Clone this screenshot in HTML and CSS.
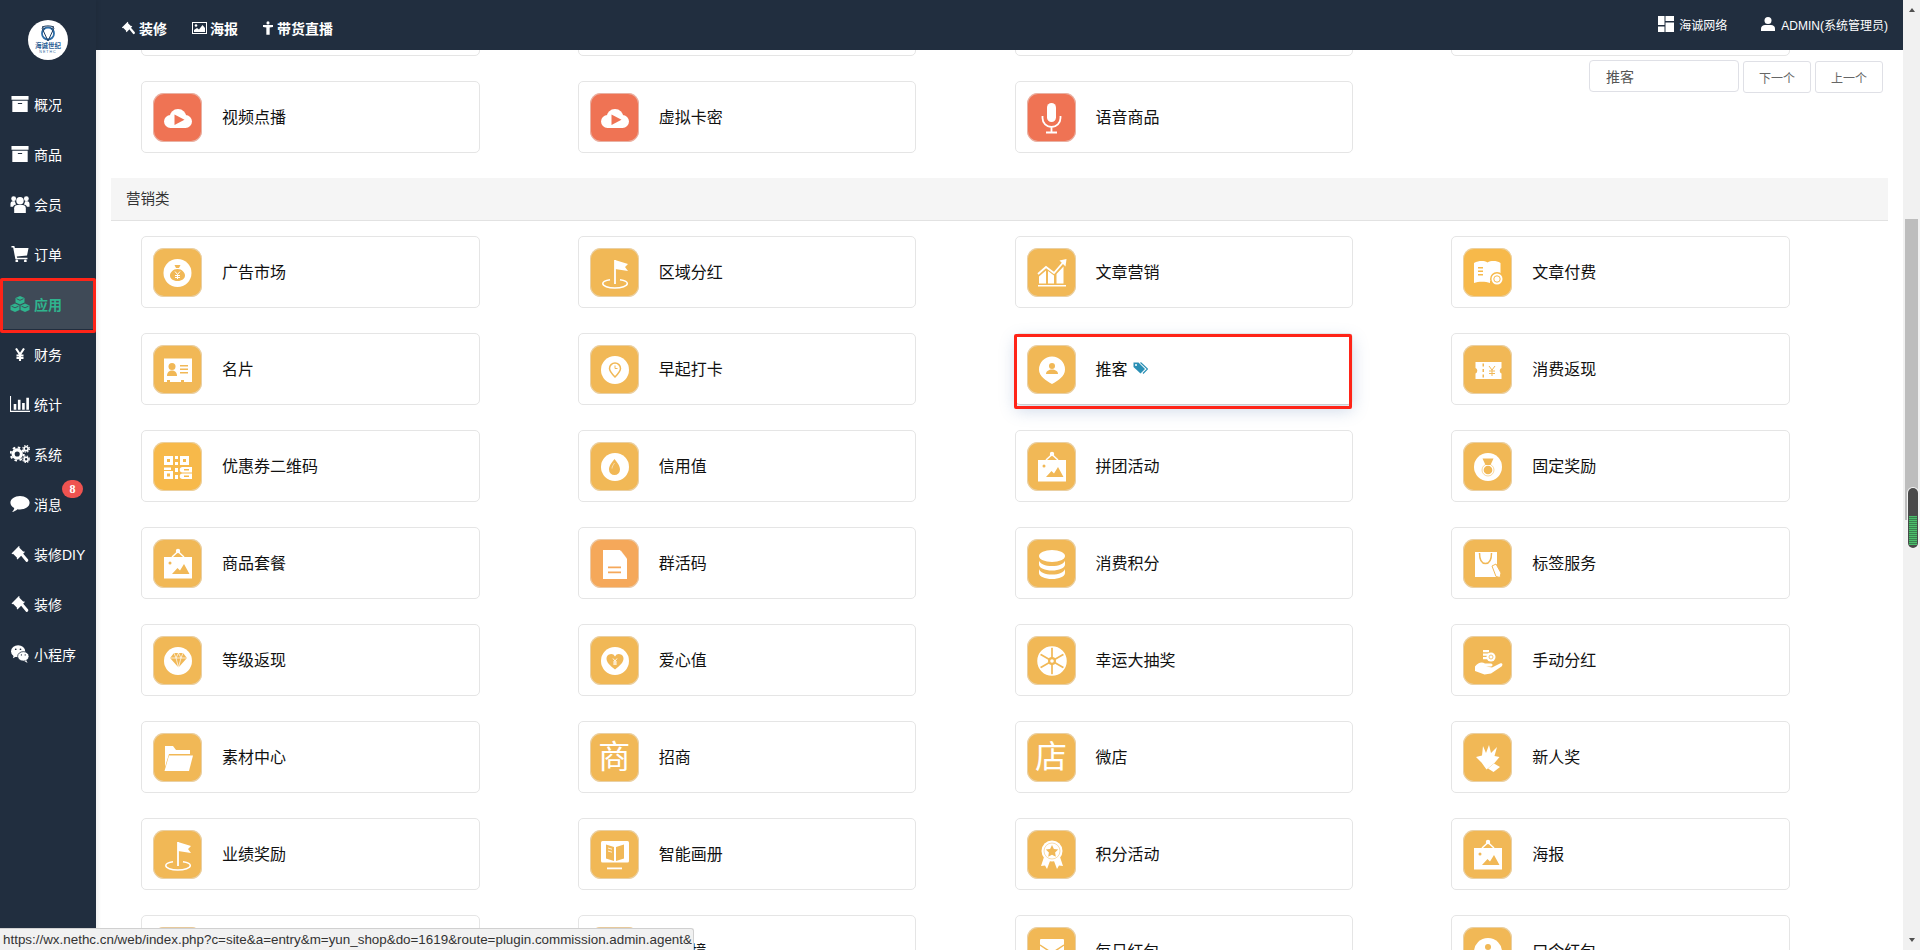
FILE: index.html
```html
<!DOCTYPE html>
<html lang="zh-CN">
<head>
<meta charset="utf-8">
<title>应用</title>
<link rel="stylesheet" href="styles.css">
</head>
<body class="page">
<svg class="defs" xmlns="http://www.w3.org/2000/svg" aria-hidden="true">
<symbol id="g-cloud" viewBox="0 0 49 49"><circle cx="17.5" cy="28.5" r="6.5" fill="#fff"/><circle cx="25" cy="24.5" r="8.5" fill="#fff"/><circle cx="32.5" cy="28.5" r="6.5" fill="#fff"/><rect x="17" y="27" width="16" height="8" fill="#fff"/><path d="M21.5 21.5l10 5.2-10 5.3z" fill="currentColor"/></symbol>
<symbol id="g-mic" viewBox="0 0 49 49"><rect x="20" y="10" width="9" height="19" rx="4.5" fill="#fff"/><path d="M15.5 23v2a9 9 0 0 0 18 0v-2M24.5 34v5M19 39.5h11" fill="none" stroke="#fff" stroke-width="1.8"/></symbol>
<symbol id="g-bag" viewBox="0 0 49 49"><circle cx="24.5" cy="25" r="14" fill="#fff"/><path d="M21.5 17h6l-1.5 3h-3zM24.5 21c4.500 0 7.500 3.500 7.500 6.500s-3 5.500-7.500 5.500-7.500-2.500-7.500-5.500 3-6.500 7.500-6.500z" fill="currentColor"/><path d="M22 23.500l2.500 3 2.500-3M24.500 26.500v4.500M22 27.500h5M22 29.500h5" fill="none" stroke="#fff" stroke-width="1"/></symbol>
<symbol id="g-flag" viewBox="0 0 49 49"><path d="M25 12v24" stroke="#fff" stroke-width="1.8"/><path d="M25 12l13 4-3 3 3 4-13-2z" fill="#fff"/><path d="M20 31.800c-4.500.8-7.200 2-7.200 3.700 0 2.500 5.300 4.500 12 4.500s12.500-2 12.500-4.500c0-1.700-2.700-3-7.300-3.700" fill="none" stroke="#fff" stroke-width="1.500"/></symbol>
<symbol id="g-chart" viewBox="0 0 49 49"><path d="M11 37h28v1.500H11z" fill="#fff"/><path d="M12 35.500v-7l7-6v13zM21 35.500V23l6 4.500v8zM29.500 35.500V26l7-7.500v17z" fill="#fff"/><path d="M11 26l8-7 8 6 9.500-11" fill="none" stroke="#fff" stroke-width="1.800"/><path d="M32.500 12.500l7-1.500-1 7.500z" fill="#fff"/></symbol>
<symbol id="g-bookcoin" viewBox="0 0 49 49"><path d="M11 15c5-2.500 10-2.500 13.500-.5 3.500-2 9-2 13 .5v18H27v2c-4-1.500-11-2-16 0z" fill="#fff"/><path d="M15 19h5v1.500h-5zM15 22.500h5V24h-5zM15 26h5v1.500h-5z" fill="currentColor"/><circle cx="34" cy="31" r="7" fill="currentColor"/><circle cx="34" cy="31" r="5.500" fill="#fff"/><circle cx="34" cy="31" r="3.200" fill="none" stroke="currentColor"/></symbol>
<symbol id="g-card" viewBox="0 0 49 49"><path d="M11 13.500h28V37h-8v-2h-3v2H17v-2h-3v2h-3z" fill="#fff"/><circle cx="19" cy="21.500" r="3.500" fill="currentColor"/><path d="M14 31c0-4 2.500-5.500 5-5.500s5 1.500 5 5.500z" fill="currentColor"/><path d="M27 20h8v1.500h-8zM27 23.500h8V25h-8zM27 27h8v1.500h-8z" fill="currentColor"/></symbol>
<symbol id="g-pinclock" viewBox="0 0 49 49"><circle cx="25" cy="25" r="14" fill="#fff"/><path d="M25 18a5.500 5.500 0 0 1 5.500 5.500c0 3-3 6-5.500 8.500-2.500-2.500-5.500-5.500-5.500-8.500A5.500 5.500 0 0 1 25 18z" fill="none" stroke="currentColor" stroke-width="1.500"/><path d="M25 20.500v3h2.500" fill="none" stroke="currentColor"/></symbol>
<symbol id="g-pinuser" viewBox="0 0 49 49"><path d="M25 11.500a13 13 0 0 1 13 13c0 7-7 11-13 14.500-6-3.500-13-7.500-13-14.500a13 13 0 0 1 13-13z" fill="#fff"/><circle cx="25" cy="21" r="3" fill="currentColor"/><path d="M19 29c0-3 3-4.500 6-4.500s6 1.500 6 4.500z" fill="currentColor"/></symbol>
<symbol id="g-ticket" viewBox="0 0 49 49"><path d="M12.500 17h26v6a3 3 0 0 0 0 5.500V34h-26v-5.500a3 3 0 0 0 0-5.500z" fill="#fff"/><path d="M19.500 18.500H21v3h-1.500zM19.500 24H21v3h-1.500zM19.500 29.500H21v3h-1.500z" fill="currentColor"/><path d="M26 21l3 4 3-4M29 25v6M26 26h6M26 28.500h6" fill="none" stroke="currentColor"/></symbol>
<symbol id="g-qr" viewBox="0 0 49 49"><path fill-rule="evenodd" d="M11 14h9v9h-9zM14 17v3h3v-3zM11 29h9v8h-9zM14 31.500v3h3v-3zM27 14h9v9h-9zM30 17v3h3v-3zM22 14h3v3h-3zM22 20h3v3h-3zM11 25.500h7V28h-7zM22 26h3v4h-3zM22 33h3v4h-3zM29.500 25H39v5.500H29.500a2.750 2.750 0 0 1 0-5.500zM31 27v1.500h5V27zM29.500 31.500H39V37H29.500a2.750 2.750 0 0 1 0-5.500zM31 33.500V35h5v-1.500z" fill="#fff"/></symbol>
<symbol id="g-drop" viewBox="0 0 49 49"><circle cx="25" cy="25" r="14" fill="#fff"/><path d="M24.500 17c2.500 3.500 5.500 6.500 5.500 10.500a5.500 5.500 0 0 1-11 0c0-4 3-7 5.500-10.500z" fill="currentColor"/><path d="M24.500 21c-1.200 2-2.500 3.500-2.500 5.500" fill="none" stroke="#fff" stroke-opacity=".5"/></symbol>
<symbol id="g-poster" viewBox="0 0 49 49"><rect x="11" y="18" width="28" height="21.500" fill="#fff"/><path d="M19 18l6-5.500 6 5.500" fill="none" stroke="#fff" stroke-width="1.500"/><circle cx="25" cy="12" r="2.200" fill="#fff"/><circle cx="17" cy="24" r="1.500" fill="currentColor"/><path d="M19 35l5.500-6 2.500 2.500 4-6.500 5.500 10z" fill="currentColor"/></symbol>
<symbol id="g-medal" viewBox="0 0 49 49"><circle cx="25" cy="25" r="14" fill="#fff"/><path d="M19.500 16.500h11L27.500 23h-5z" fill="currentColor"/><circle cx="25" cy="28" r="6" fill="none" stroke="currentColor" stroke-opacity=".55"/><circle cx="25" cy="28" r="4.300" fill="currentColor"/></symbol>
<symbol id="g-doc" viewBox="0 0 49 49"><path d="M13 11h17l7 9v20H13z" fill="#fff"/><path d="M31 11.500l6 8h-6z" fill="#fff" opacity=".55"/><path d="M18 27.500h13v1.800H18zM18 32.500h13v1.800H18z" fill="currentColor"/></symbol>
<symbol id="g-db" viewBox="0 0 49 49"><ellipse cx="25" cy="17" rx="13" ry="6" fill="#fff"/><path d="M12 21.500c1 3.500 6 5.500 13 5.500s12-2 13-5.500v4c0 3.500-6 6-13 6s-13-2.500-13-6z" fill="#fff"/><path d="M12 30c1 3.500 6 5.500 13 5.500S37 33.500 38 30v4c0 3.500-6 6-13 6s-13-2.500-13-6z" fill="#fff"/></symbol>
<symbol id="g-bagtag" viewBox="0 0 49 49"><path d="M12 13h22v25H12z" fill="#fff"/><path d="M16.500 14c0 7 2 10.500 6 10.500s6-3.500 6-10.500" fill="none" stroke="currentColor" stroke-width="1.500"/><path d="M29 27l4-2 5 9-1 4.500-4-1z" fill="#fff" stroke="currentColor"/></symbol>
<symbol id="g-diamond" viewBox="0 0 49 49"><circle cx="25" cy="25" r="14" fill="#fff"/><path d="M17 22l4-5h9l4 5-8.500 9.500z" fill="currentColor"/><path d="M17 22h17M21 17l2 5 2.500 9.500L28 22l2-5M25.500 17l-2.500 5M25.500 17l2.500 5" fill="none" stroke="#fff" stroke-width=".7"/></symbol>
<symbol id="g-heart" viewBox="0 0 49 49"><circle cx="25" cy="25" r="14" fill="#fff"/><path d="M25 33.500c-5-4-8.500-7-8.500-11a4.500 4.500 0 0 1 8.500-2 4.500 4.500 0 0 1 8.500 2c0 4-3.500 7-8.500 11z" fill="currentColor"/><path d="M23 22.500l2 2.500 2-2.500M25 25v4M23 26h4M23 28h4" fill="none" stroke="#fff" stroke-width=".9"/></symbol>
<symbol id="g-wheel" viewBox="0 0 49 49"><circle cx="25" cy="25" r="14" fill="#fff"/><path d="M25 11v28M12.900 18l24.200 14M12.900 32l24.200-14" stroke="currentColor" stroke-width="1.700"/><circle cx="25" cy="25" r="4" fill="currentColor"/><circle cx="25" cy="25" r="1.800" fill="#fff"/><circle cx="25" cy="25" r="14" fill="none" stroke="#fff" stroke-width="1.500"/></symbol>
<symbol id="g-hand" viewBox="0 0 49 49"><path d="M20 14h6v2.200h-6zM20 17.500h6v2.200h-6zM20 21h6v2.200h-6z" fill="#fff"/><circle cx="28" cy="21" r="4.500" fill="#fff"/><circle cx="28" cy="21" r="2" fill="none" stroke="currentColor" stroke-width=".8"/><path d="M12 30.500c3-4 7-5 10-3h6c2 0 2 3 0 3h-5l6 1 8-4c2-1 3.500 1 1.500 3l-10.500 7-6.500 1-9.500-3.500z" fill="#fff"/></symbol>
<symbol id="g-folder" viewBox="0 0 49 49"><path d="M12 13h8l3 4h14v4H16l-4 13z" fill="#fff"/><path d="M16 22.500h24L36 38H11.500z" fill="#fff"/></symbol>
<symbol id="g-gift" viewBox="0 0 49 49"><path d="M13 24l6-1.500 1-9.500 3 7 3-8 2 8 6-6-2.500 9 5 1-5 6-8 6.500-5-7z" fill="#fff"/><path d="M25 35.500l6-5 6 3.500-6.500 5z" fill="#fff"/></symbol>
<symbol id="g-screen" viewBox="0 0 49 49"><rect x="11" y="11" width="28" height="21.500" rx="1.500" fill="#fff"/><path d="M16 14.500l8 2.500v14l-8-2.500zM34 14.500L26 17v14l8-2.500z" fill="currentColor"/><path d="M18 18l4 1.200M18 21l4 1.200" stroke="#fff" stroke-width=".8"/><path d="M17 37.500h15v1.800H17z" fill="#fff"/></symbol>
<symbol id="g-badge" viewBox="0 0 49 49"><path d="M17 27l-3 9 4-.5 2 3.500 3-8zM33 27l3 9-4-.5-2 3.500-3-8z" fill="#fff"/><circle cx="25" cy="21" r="10.500" fill="#fff"/><circle cx="25" cy="21" r="8" fill="none" stroke="currentColor" stroke-opacity=".5"/><path d="M25 15l1.900 3.900 4.300.6-3.100 3 .7 4.300-3.800-2-3.800 2 .7-4.300-3.100-3 4.300-.6z" fill="currentColor"/></symbol>
<symbol id="g-mail" viewBox="0 0 49 49"><rect x="13" y="12" width="24" height="28" rx="1" fill="#fff"/><path d="M13 18l12 8 12-8" fill="none" stroke="currentColor" stroke-width="1.500"/></symbol>
<symbol id="g-person" viewBox="0 0 49 49"><circle cx="25" cy="25" r="14" fill="#fff"/><circle cx="25" cy="20" r="3" fill="currentColor"/><path d="M19 30c0-4 3-6 6-6s6 2 6 6z" fill="currentColor"/></symbol>
<symbol id="n-box" viewBox="0 0 16 15"><path d="M0 0h16v3.500H0z" fill="currentColor"/><path d="M.8 4.500h14.400V15H.8zM6 6.500v1h4v-1z" fill="currentColor" fill-rule="evenodd"/></symbol>
<symbol id="n-users" viewBox="0 0 18 17"><circle cx="9" cy="5.500" r="3.500" fill="currentColor"/><path d="M3.500 17v-4.500c0-2 1.500-3 3-3h5c1.500 0 3 1 3 3V17z" fill="currentColor"/><circle cx="3" cy="3.500" r="2.300" fill="currentColor"/><circle cx="15" cy="3.500" r="2.300" fill="currentColor"/><path d="M0 11V8.500c0-1.500 1-2.500 2-2.500h2.200c.1 1.200.6 2.200 1.200 3-1.700.3-2.700 1.200-3 2zM18 11V8.500c0-1.500-1-2.500-2-2.500h-2.200c-.1 1.200-.6 2.200-1.200 3 1.700.3 2.700 1.200 3 2z" fill="currentColor"/></symbol>
<symbol id="n-cart" viewBox="0 0 16 15"><path d="M0 0h2.700l.5 1.800H16l-1.400 7-9.600 1 .3 1.200h9.700V12.500H3.700L1.600 1.500H0z" fill="currentColor"/><circle cx="5" cy="14" r="1.300" fill="currentColor"/><circle cx="13" cy="14" r="1.300" fill="currentColor"/></symbol>
<symbol id="n-cubes" viewBox="0 0 20 16"><g fill="currentColor"><path d="M10 0l4.500 2v4.500L10 8.500l-4.500-2V2z"/><path d="M5 7.500l4.500 2v4.500L5 16 .5 14V9.500z"/><path d="M15 7.500l4.500 2v4.500L15 16l-4.500-2V9.500z"/></g><path d="M6.500 2.700L10 4.300l3.500-1.600M1.500 10.200L5 11.800l3.500-1.600M11.500 10.200l3.500 1.600 3.500-1.600" fill="none" stroke="#3f4a57" stroke-width=".9"/></symbol>
<symbol id="n-yen" viewBox="0 0 10 13"><path d="M1 .5l4 6 4-6M5 6.500V13M1.500 7.500h7M1.500 10h7" fill="none" stroke="currentColor" stroke-width="2.100"/></symbol>
<symbol id="n-bars" viewBox="0 0 19 15"><path d="M0 0h1v14h18v1H0z" fill="currentColor"/><path d="M3.500 7.500H6V13H3.500zM7.500 3.500H10V13H7.500zM11.500 6.500H14V13h-2.500zM15.500 1.500H18V13h-2.500z" fill="currentColor"/></symbol>
<symbol id="n-cogs" viewBox="0 0 18 16"><circle cx="6.500" cy="8" r="3.700" fill="none" stroke="currentColor" stroke-width="2.800"/><circle cx="6.500" cy="8" r="5.900" fill="none" stroke="currentColor" stroke-width="1.700" stroke-dasharray="2.300 2.300"/><circle cx="14.500" cy="3.300" r="1.800" fill="none" stroke="currentColor" stroke-width="1.500"/><circle cx="14.500" cy="3.300" r="3" fill="none" stroke="currentColor" stroke-width="1" stroke-dasharray="1.200 1.200"/><circle cx="14.500" cy="12.700" r="1.800" fill="none" stroke="currentColor" stroke-width="1.500"/><circle cx="14.500" cy="12.700" r="3" fill="none" stroke="currentColor" stroke-width="1" stroke-dasharray="1.200 1.200"/></symbol>
<symbol id="n-chat" viewBox="0 0 18 15"><path d="M9 0c5 0 9 2.800 9 6.300S14 12.600 9 12.600c-.8 0-1.600 0-2.300-.2C5.200 13.800 3.200 14.800 1.500 15c1-.9 1.900-2.100 2.100-3.700C1.400 10.200 0 8.400 0 6.300 0 2.800 4 0 9 0z" fill="currentColor"/></symbol>
<symbol id="n-gavel" viewBox="0 0 16 17"><path d="M0 8l7-7 .8.800-.6.600 4 4 .6-.6.800.8-7 7-.8-.8.600-.6-4-4-.6.600z" fill="currentColor"/><path d="M8.500 9.500l2-2 5.200 6.300a1.500 1.500 0 0 1-2 2z" fill="currentColor"/></symbol>
<symbol id="n-wechat" viewBox="0 0 19 19"><ellipse cx="7.500" cy="6.500" rx="7.500" ry="6.300" fill="currentColor"/><path d="M3 10.500l-1 3.500 4-2z" fill="currentColor"/><ellipse cx="13" cy="12" rx="6" ry="5" fill="currentColor" stroke="#212e3f" stroke-width=".8"/><path d="M16 16l1.500 3-3.500-2z" fill="currentColor"/><circle cx="5" cy="4.500" r=".9" fill="#212e3f"/><circle cx="10" cy="4.500" r=".9" fill="#212e3f"/><circle cx="11" cy="10.500" r=".7" fill="#212e3f"/><circle cx="15" cy="10.500" r=".7" fill="#212e3f"/></symbol>
<symbol id="n-image" viewBox="0 0 15 12"><path fill-rule="evenodd" d="M0 0h15v12H0zM1 1v10h13V1z" fill="currentColor"/><circle cx="4" cy="3.500" r="1.300" fill="currentColor"/><path d="M2 10V8l3-2 2 1.500L10.500 3 13 6v4z" fill="currentColor"/></symbol>
<symbol id="n-male" viewBox="0 0 9 12"><circle cx="4.500" cy="1.400" r="1.400" fill="currentColor"/><path d="M0 3.200h9V5L6 5.600V12H3V5.600L0 5z" fill="currentColor"/></symbol>
<symbol id="n-grid" viewBox="0 0 16 16"><path d="M0 0h6.500v9H0zM0 10.500h6.500V16H0zM7.500 0H16v5H7.500zM7.500 6.500H16V16H7.500z" fill="currentColor"/></symbol>
<symbol id="n-user" viewBox="0 0 14 14"><circle cx="7" cy="3.500" r="3.500" fill="currentColor"/><path d="M0 14v-2.500C0 9.500 2 8 4 8h6c2 0 4 1.500 4 3.500V14z" fill="currentColor"/></symbol>
<symbol id="n-tags" viewBox="0 0 15 12"><path d="M.5.500h5l6.500 6.500-4.500 4.500L.5 5z" fill="currentColor"/><path d="M7.500.500l7 6.500-4.500 4.500" fill="none" stroke="currentColor" stroke-width="1.200"/><circle cx="3" cy="3" r="1" fill="#fff"/></symbol>
</svg>

<aside class="sidebar">
  <div class="logo-wrap">
    <svg class="logo" viewBox="0 0 40 40" role="img" aria-label="海诚世纪 NETHC">
      <circle cx="20" cy="20" r="20" fill="#fff"/>
      <circle cx="20" cy="13.500" r="6" fill="none" stroke="#2e6ea8" stroke-width="1.800"/>
      <path d="M14 7l3 2M26 7l-3 2M14 7c4-1.500 8-1.500 12 0M14 8l6 13 6-13" fill="none" stroke="#1d3a5c" stroke-width="1"/>
      <text class="logo-cn" x="20" y="28">海诚世纪</text>
      <text class="logo-en" x="20" y="33">NETHC</text>
    </svg>
  </div>
  <nav class="side-nav">
    <a class="side-item"><svg class="side-ic"><use href="#n-box"/></svg>概况</a>
    <a class="side-item"><svg class="side-ic"><use href="#n-box"/></svg>商品</a>
    <a class="side-item"><svg class="side-ic side-ic-lg"><use href="#n-users"/></svg>会员</a>
    <a class="side-item"><svg class="side-ic"><use href="#n-cart"/></svg>订单</a>
    <a class="side-item is-active"><svg class="side-ic side-ic-lg"><use href="#n-cubes"/></svg>应用<span class="red-box red-box-side"></span></a>
    <a class="side-item"><svg class="side-ic side-ic-sm"><use href="#n-yen"/></svg>财务</a>
    <a class="side-item"><svg class="side-ic side-ic-lg"><use href="#n-bars"/></svg>统计</a>
    <a class="side-item"><svg class="side-ic side-ic-lg"><use href="#n-cogs"/></svg>系统</a>
    <a class="side-item"><svg class="side-ic"><use href="#n-chat"/></svg>消息<span class="badge">8</span></a>
    <a class="side-item"><svg class="side-ic side-ic-lg"><use href="#n-gavel"/></svg>装修DIY</a>
    <a class="side-item"><svg class="side-ic side-ic-lg"><use href="#n-gavel"/></svg>装修</a>
    <a class="side-item"><svg class="side-ic side-ic-lg"><use href="#n-wechat"/></svg>小程序</a>
  </nav>
</aside>

<div class="main-col">
  <header class="topbar">
    <nav class="top-nav">
      <a class="top-link"><svg class="top-ic"><use href="#n-gavel"/></svg>装修</a>
      <a class="top-link"><svg class="top-ic"><use href="#n-image"/></svg>海报</a>
      <a class="top-link"><svg class="top-ic top-ic-sm"><use href="#n-male"/></svg>带货直播</a>
    </nav>
    <div class="top-right">
      <a class="top-meta"><svg class="meta-ic"><use href="#n-grid"/></svg>海诚网络</a>
      <a class="top-meta"><svg class="meta-ic meta-ic-sm"><use href="#n-user"/></svg>ADMIN(系统管理员)</a>
    </div>
  </header>
  <main class="content">
    <div class="finder">
      <input class="finder-input" value="推客" aria-label="搜索">
      <button class="finder-btn">下一个</button>
      <button class="finder-btn">上一个</button>
    </div>
    <div class="scroller">
      <section class="group">
        <div class="cards">
          <div class="card"></div><div class="card"></div><div class="card"></div><div class="card"></div>
          <a class="card"><span class="tile tile-red"><svg class="glyph"><use href="#g-cloud"/></svg></span>视频点播</a>
          <a class="card"><span class="tile tile-red"><svg class="glyph"><use href="#g-cloud"/></svg></span>虚拟卡密</a>
          <a class="card"><span class="tile tile-red"><svg class="glyph"><use href="#g-mic"/></svg></span>语音商品</a>
        </div>
      </section>
      <section class="group">
        <h2 class="group-title">营销类</h2>
        <div class="cards">
          <a class="card"><span class="tile"><svg class="glyph"><use href="#g-bag"/></svg></span>广告市场</a>
          <a class="card"><span class="tile"><svg class="glyph"><use href="#g-flag"/></svg></span>区域分红</a>
          <a class="card"><span class="tile"><svg class="glyph"><use href="#g-chart"/></svg></span>文章营销</a>
          <a class="card"><span class="tile tile-bright"><svg class="glyph"><use href="#g-bookcoin"/></svg></span>文章付费</a>
          <a class="card"><span class="tile"><svg class="glyph"><use href="#g-card"/></svg></span>名片</a>
          <a class="card"><span class="tile"><svg class="glyph"><use href="#g-pinclock"/></svg></span>早起打卡</a>
          <a class="card is-hover"><span class="tile"><svg class="glyph"><use href="#g-pinuser"/></svg></span>推客<svg class="tag-ic"><use href="#n-tags"/></svg><span class="red-box red-box-card"></span></a>
          <a class="card"><span class="tile"><svg class="glyph"><use href="#g-ticket"/></svg></span>消费返现</a>
          <a class="card"><span class="tile tile-bright"><svg class="glyph"><use href="#g-qr"/></svg></span>优惠券二维码</a>
          <a class="card"><span class="tile"><svg class="glyph"><use href="#g-drop"/></svg></span>信用值</a>
          <a class="card"><span class="tile"><svg class="glyph"><use href="#g-poster"/></svg></span>拼团活动</a>
          <a class="card"><span class="tile"><svg class="glyph"><use href="#g-medal"/></svg></span>固定奖励</a>
          <a class="card"><span class="tile"><svg class="glyph"><use href="#g-poster"/></svg></span>商品套餐</a>
          <a class="card"><span class="tile tile-orange"><svg class="glyph"><use href="#g-doc"/></svg></span>群活码</a>
          <a class="card"><span class="tile"><svg class="glyph"><use href="#g-db"/></svg></span>消费积分</a>
          <a class="card"><span class="tile"><svg class="glyph"><use href="#g-bagtag"/></svg></span>标签服务</a>
          <a class="card"><span class="tile"><svg class="glyph"><use href="#g-diamond"/></svg></span>等级返现</a>
          <a class="card"><span class="tile"><svg class="glyph"><use href="#g-heart"/></svg></span>爱心值</a>
          <a class="card"><span class="tile"><svg class="glyph"><use href="#g-wheel"/></svg></span>幸运大抽奖</a>
          <a class="card"><span class="tile"><svg class="glyph"><use href="#g-hand"/></svg></span>手动分红</a>
          <a class="card"><span class="tile"><svg class="glyph"><use href="#g-folder"/></svg></span>素材中心</a>
          <a class="card"><span class="tile tile-char">商</span>招商</a>
          <a class="card"><span class="tile tile-char">店</span>微店</a>
          <a class="card"><span class="tile"><svg class="glyph"><use href="#g-gift"/></svg></span>新人奖</a>
          <a class="card"><span class="tile"><svg class="glyph"><use href="#g-flag"/></svg></span>业绩奖励</a>
          <a class="card"><span class="tile"><svg class="glyph"><use href="#g-screen"/></svg></span>智能画册</a>
          <a class="card"><span class="tile"><svg class="glyph"><use href="#g-badge"/></svg></span>积分活动</a>
          <a class="card"><span class="tile"><svg class="glyph"><use href="#g-poster"/></svg></span>海报</a>
          <a class="card"><span class="tile tile-dark"></span>签到奖励</a>
          <a class="card"><span class="tile tile-dark"></span>微环境</a>
          <a class="card"><span class="tile"><svg class="glyph"><use href="#g-mail"/></svg></span>每日红包</a>
          <a class="card"><span class="tile"><svg class="glyph"><use href="#g-person"/></svg></span>口令红包</a>
        </div>
      </section>
    </div>
  </main>
</div>

<div class="vscroll">
  <span class="vscroll-up"></span>
  <span class="vscroll-thumb"></span>
  <span class="vscroll-down"></span>
  <span class="pill"><span class="pill-fill"></span></span>
</div>

<div class="status">https://wx.nethc.cn/web/index.php?c=site&amp;a=entry&amp;m=yun_shop&amp;do=1619&amp;route=plugin.commission.admin.agent&amp;</div>
</body>
</html>
```
FILE: styles.css
```css
* { box-sizing: border-box; }
html, body { height: 100%; }
.page {
  margin: 0;
  height: 950px;
  overflow: hidden;
  display: flex;
  position: relative;
  background: #fff;
  color: #000;
  font-family: "Liberation Sans", "Noto Sans CJK SC", sans-serif;
}
.defs { position: absolute; width: 0; height: 0; }

/* sidebar */
.sidebar {
  flex: 0 0 96px;
  background: #212e3f;
  color: #fff;
  box-shadow: 2px 0 4px rgba(0, 0, 0, .07);
  position: relative;
  z-index: 3;
}
.logo-wrap { height: 79px; padding: 20px 0 0 28px; }
.logo { display: block; width: 40px; height: 40px; }
.logo-cn { font-size: 6.5px; font-weight: 700; fill: #2e5f96; text-anchor: middle; }
.logo-en { font-size: 3.6px; letter-spacing: 1px; fill: #2e5f96; text-anchor: middle; }
.side-item {
  height: 50px;
  display: flex;
  align-items: center;
  padding-left: 10px;
  font-size: 14px;
  position: relative;
}
.side-ic { width: 20px; height: 16px; margin-right: 4px; color: #fff; }
.side-ic-lg { height: 18px; }
.side-ic-sm { height: 13px; }
.is-active {
  background: #3f4a57;
  color: #2fb48e;
  font-weight: 700;
  border-right: 1px solid #2fa58a;
  margin-right: 2px;
}
.is-active .side-ic { color: #2fb48e; }
.red-box { position: absolute; border: 3px solid #ff2418; border-radius: 2px; pointer-events: none; }
.red-box-side { left: 0; right: -3px; top: -1px; bottom: -4px; }
.badge {
  position: absolute;
  left: 62px;
  top: 1px;
  width: 21px;
  height: 18px;
  border-radius: 9px;
  background: #ef5350;
  color: #fff;
  font-family: "Liberation Serif", serif;
  font-size: 12px;
  font-weight: 700;
  line-height: 18px;
  text-align: center;
}

/* main */
.main-col { flex: 1 1 auto; min-width: 0; display: flex; flex-direction: column; }
.topbar {
  flex: 0 0 50px;
  background: #212e3f;
  color: #fff;
  display: flex;
  justify-content: space-between;
  padding: 0 15px 0 25px;
  position: relative;
  z-index: 2;
}
.top-nav { display: flex; gap: 25px; align-items: center; height: 50px; padding-top: 5px; }
.top-link { display: flex; align-items: center; font-size: 14px; font-weight: 700; }
.top-ic { width: 15px; height: 14px; margin-right: 3px; color: #fff; }
.top-ic-sm { width: 10px; margin-right: 4px; }
.top-right { display: flex; gap: 34px; align-items: center; height: 48px; }
.top-meta { display: flex; align-items: center; font-size: 12px; }
.meta-ic { width: 16px; height: 16px; margin-right: 5px; color: #fff; }
.meta-ic-sm { width: 14px; height: 14px; margin-right: 6px; }
.content { flex: 1 1 auto; position: relative; overflow: hidden; }
.scroller { margin: -81px 0 0 15px; width: 1777px; }
.group-title {
  margin: 0;
  height: 43px;
  background: #f5f5f5;
  border-bottom: 1px solid #e2e2e2;
  padding-left: 15px;
  color: #333;
  font-size: 14.500px;
  font-weight: 400;
  line-height: 42px;
}
.cards {
  display: grid;
  grid-template-columns: repeat(4, 338.670px);
  column-gap: 98.130px;
  row-gap: 25px;
  padding: 15px 0 25px 30px;
}
.card {
  height: 72px;
  display: flex;
  align-items: center;
  gap: 20px;
  padding: 0 11px 3px;
  border: 1px solid #e5e5e5;
  border-radius: 5px;
  background: #fff;
  color: #111;
  font-size: 16px;
  position: relative;
}
.is-hover { box-shadow: 0 6px 16px rgba(90, 125, 180, .28); border-bottom-color: #ccc; }
.tile {
  flex: 0 0 49px;
  width: 49px;
  height: 49px;
  margin-top: 3px;
  border-radius: 11px;
  background: #f1b856;
  color: #f1b856;
  box-shadow: inset 0 0 0 1px rgba(228, 228, 228, .55);
}
.tile-red { background: #ef7354; color: #ef7354; }
.tile-bright { background: #f7b94a; color: #f7b94a; }
.tile-orange { background: #f5a85a; color: #f5a85a; }
.tile-dark { background: #e9a945; color: #e9a945; }
.tile-char {
  color: #fff;
  font-size: 32px;
  font-weight: 400;
  line-height: 49px;
  text-align: center;
}
.glyph { display: block; width: 49px; height: 49px; }
.tag-ic { width: 15px; height: 12px; margin-left: -15px; color: #2a8fb5; }
.red-box-card { left: -2px; right: 0; top: 0; bottom: -5px; }

/* search overlay */
.finder { position: absolute; top: 10px; right: 20px; z-index: 1; display: flex; gap: 4px; align-items: flex-start; }
.finder-input {
  width: 150px;
  height: 32px;
  padding: 0 16px;
  border: 1px solid #dfe0e6;
  border-radius: 4px;
  background: #fff;
  color: #555;
  font: 14px "Liberation Sans", "Noto Sans CJK SC", sans-serif;
}
.finder-btn {
  width: 68px;
  height: 32px;
  margin-top: 1px;
  padding: 0;
  border: 1px solid #dfe0e6;
  border-radius: 3px;
  background: #fff;
  color: #666;
  font: 12px "Liberation Sans", "Noto Sans CJK SC", sans-serif;
}

/* scrollbar */
.vscroll { flex: 0 0 17px; background: #f1f1f1; position: relative; display: flex; flex-direction: column; align-items: center; z-index: 4; }
.vscroll-up { margin-top: 8px; border: 3.500px solid transparent; border-top: 0; border-bottom: 4px solid #505050; }
.vscroll-thumb { width: 13px; height: 301px; margin-top: 207px; background: #bdbdbd; }
.vscroll-down { margin-top: auto; margin-bottom: 8px; border: 3.500px solid transparent; border-bottom: 0; border-top: 4px solid #505050; }
.pill {
  position: absolute;
  left: 5px;
  top: 488px;
  width: 10px;
  height: 60px;
  padding: 28px 1px 3px;
  background: #4a4a4a;
  border-radius: 5px;
  box-shadow: 0 0 0 1px #f4f4f4;
}
.pill-fill {
  display: block;
  height: 100%;
  background: repeating-linear-gradient(#4bbf6b 0 1px, #3b7f50 1px 2px);
}

/* status bubble */
.status {
  position: absolute;
  left: 0;
  bottom: 0;
  width: 694px;
  height: 22px;
  padding-left: 3px;
  background: #f1f1f1;
  border-top: 1px solid #d0d0d0;
  border-right: 1px solid #d0d0d0;
  border-top-right-radius: 3px;
  color: #333;
  font-size: 13.400px;
  line-height: 21px;
  white-space: nowrap;
  overflow: hidden;
  z-index: 5;
}
```
